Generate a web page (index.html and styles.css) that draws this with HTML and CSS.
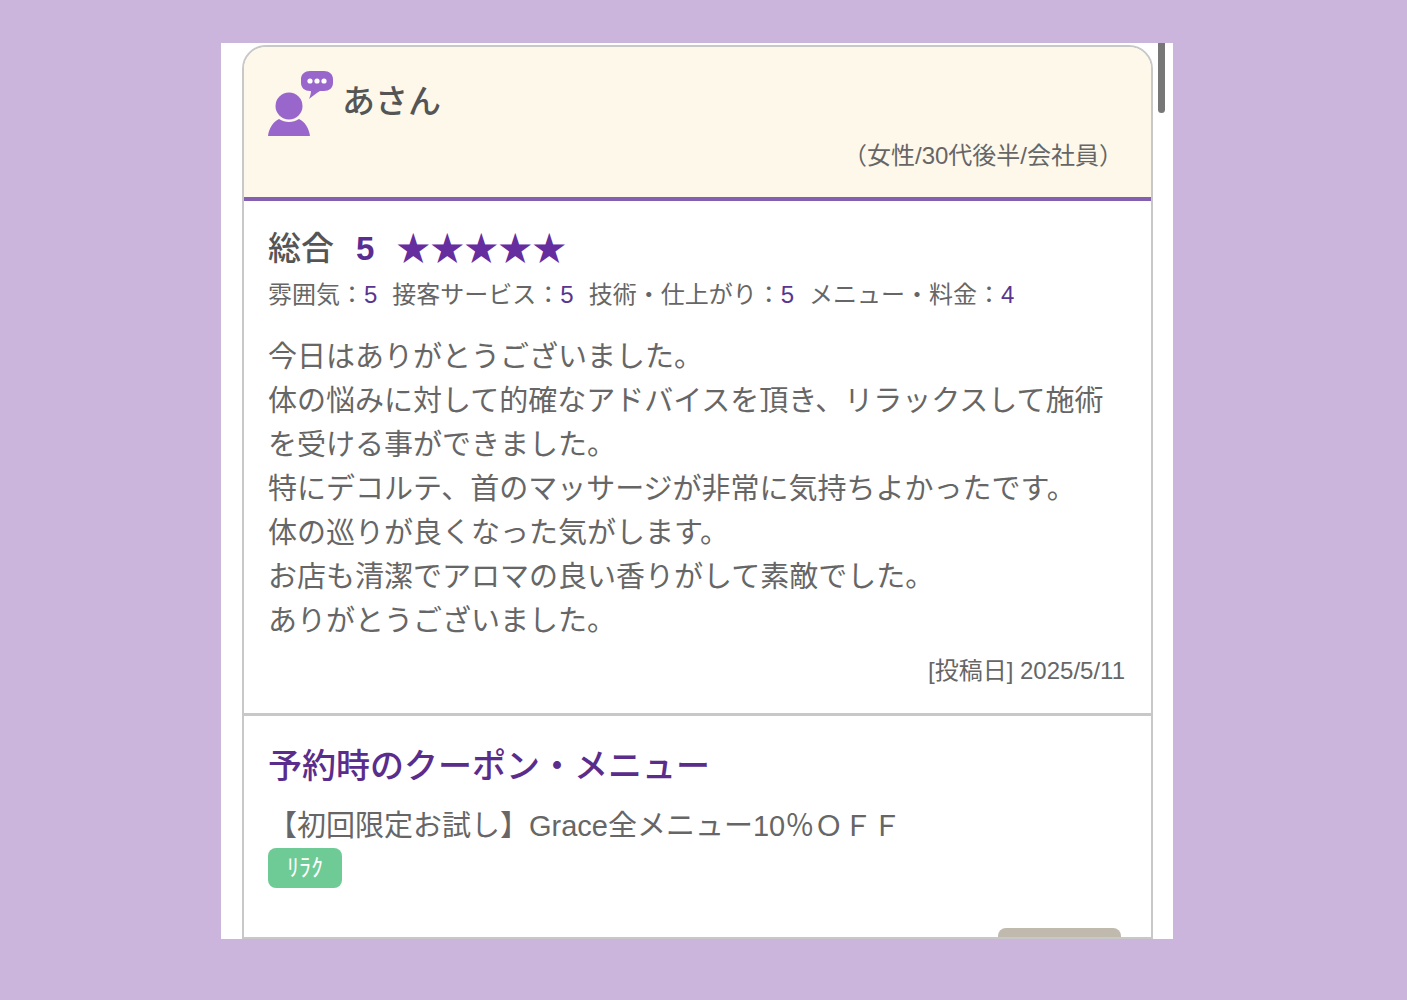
FILE: index.html
```
<!DOCTYPE html>
<html lang="ja">
<head>
    <meta charset="UTF-8">
    <meta name="viewport" content="width=device-width, initial-scale=1.0">
    <title>口コミ</title>
    <link rel="stylesheet" href="styles.css">
</head>
<body>
    <main class="panel">
        <article class="review">
            <header class="review-header">
                <div class="user">
                    <svg class="user-icon" viewBox="0 0 66 68" aria-hidden="true">
                        <path d="M42 1h14c5 0 9 3 9 8v4c0 5-4 8-9 8h-4c-4 2-7 5-11 8 1-3 2-5 2-8h-1c-5 0-9-3-9-8V9c0-5 4-8 9-8z"/>
                        <circle class="dot" cx="42" cy="11" r="2.6"/>
                        <circle class="dot" cx="49" cy="11" r="2.6"/>
                        <circle class="dot" cx="56" cy="11" r="2.6"/>
                        <circle cx="21" cy="36" r="13.500"/>
                        <path d="M0 66c1-8 5-14 11-17 6 4 14 4 20 0 6 3 10 9 11 17z"/>
                    </svg>
                    <h2 class="user-name">あさん</h2>
                </div>
                <p class="user-info">（女性/30代後半/会社員）</p>
            </header>
            <section class="review-body">
                <p class="total">総合<span class="score">5</span><span class="stars">★★★★★</span></p>
                <ul class="ratings">
                    <li>雰囲気：<b>5</b></li>
                    <li>接客サービス：<b>5</b></li>
                    <li>技術・仕上がり：<b>5</b></li>
                    <li>メニュー・料金：<b>4</b></li>
                </ul>
                <p class="comment">今日はありがとうございました。<br>
                体の悩みに対して的確なアドバイスを頂き、リラックスして施術を受ける事ができました。<br>
                特にデコルテ、首のマッサージが非常に気持ちよかったです。<br>
                体の巡りが良くなった気がします。<br>
                お店も清潔でアロマの良い香りがして素敵でした。<br>
                ありがとうございました。</p>
                <p class="date">[投稿日] 2025/5/11</p>
            </section>
            <section class="coupon">
                <h3 class="coupon-title">予約時のクーポン・メニュー</h3>
                <p class="coupon-name">【初回限定お試し】Grace全メニュー10％ＯＦＦ</p>
                <span class="tag">ﾘﾗｸ</span>
                <button class="more" type="button" aria-label="詳細"></button>
            </section>
        </article>
        <div class="scrollbar"></div>
    </main>
</body>
</html>
```
FILE: styles.css
```
* {
    box-sizing: border-box;
}

body {
    display: flex;
    height: 100vh;
    margin: 0;
    padding: 43px 234px 61px 221px;
    background-color: #cbb5dc;
    color: #666;
    font-family: "Liberation Sans", "Noto Sans CJK JP", sans-serif;
}

h2, h3, p, ul {
    margin: 0;
    padding: 0;
}

.panel {
    position: relative;
    flex: 1;
    display: flex;
    padding: 2px 20px 0 21px;
    background-color: #fff;
    overflow: hidden;
}

.review {
    flex: 1;
    border: 2px solid #c8c8c8;
    border-radius: 24px 24px 0 0;
    overflow: hidden;
}

.review-header {
    padding: 23px 28px 24px 24px;
    background-color: #fef8eb;
    border-bottom: 4px solid #8560b0;
}

.user {
    display: flex;
    gap: 8px;
}

.user-icon {
    width: 66px;
    height: 68px;
    fill: #9966cc;
}

.user-icon .dot {
    fill: #fff;
}

.user-name {
    color: #555;
    font-size: 33px;
    font-weight: 500;
    line-height: 64px;
}

.user-info {
    font-size: 24px;
    line-height: 35px;
    text-align: right;
}

.review-body {
    padding: 24px 26px 24px 24px;
    border-bottom: 3px solid #c8c8c8;
}

.total {
    display: flex;
    gap: 22px;
    color: #555;
    font-size: 33px;
    font-weight: 500;
    line-height: 48px;
}

.score {
    color: #5a2d91;
    font-weight: bold;
}

.stars {
    color: #662d9f;
    font-size: 34px;
}

.ratings {
    display: flex;
    flex-wrap: wrap;
    gap: 15px;
    font-size: 24px;
    line-height: 44px;
    list-style: none;
}

.ratings b {
    color: #5a3590;
    font-weight: normal;
}

.comment {
    margin-top: 18px;
    font-size: 29px;
    line-height: 44px;
}

.date {
    margin-top: 10px;
    font-size: 24px;
    line-height: 36px;
    text-align: right;
}

.coupon {
    display: flex;
    flex-direction: column;
    align-items: flex-start;
    padding: 24px 30px 0 24px;
}

.coupon-title {
    color: #5a2d8c;
    font-size: 34px;
    font-weight: 500;
    line-height: 52px;
}

.coupon-name {
    margin-top: 12px;
    font-size: 29px;
    line-height: 44px;
}

.tag {
    padding: 0 19px;
    background-color: #6fcb96;
    border-radius: 8px;
    color: #fff;
    font-size: 24px;
    line-height: 40px;
}

.more {
    align-self: flex-end;
    width: 123px;
    height: 48px;
    margin-top: 40px;
    border: none;
    border-radius: 8px;
    background-color: #bfb9ae;
}

.scrollbar {
    position: absolute;
    top: 0;
    right: 8px;
    width: 7px;
    height: 70px;
    border-radius: 0 0 4px 4px;
    background-color: #777;
}
```
